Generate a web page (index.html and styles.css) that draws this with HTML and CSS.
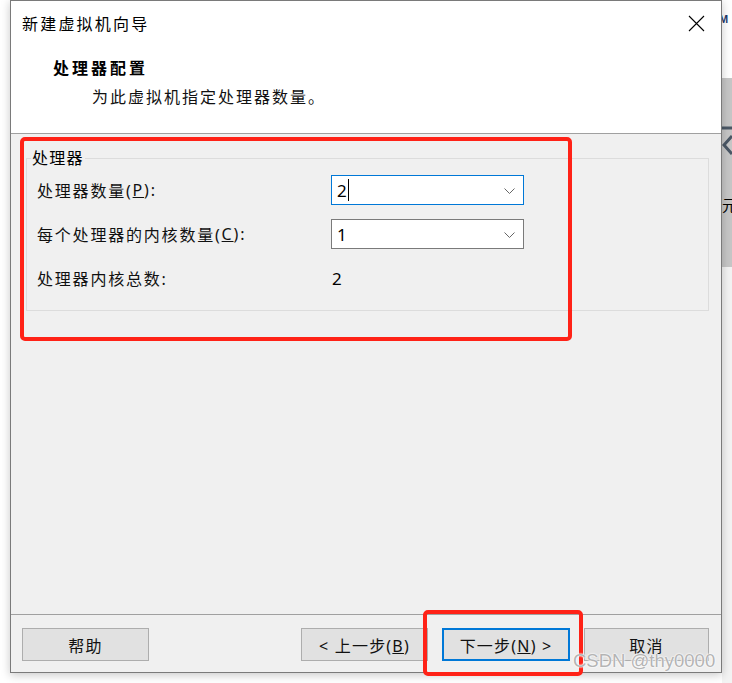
FILE: index.html
```html
<!DOCTYPE html>
<html lang="zh-CN">
<head>
    <meta charset="UTF-8">
    <title>新建虚拟机向导</title>
    <link rel="stylesheet" href="styles.css">
</head>
<body>
    <div class="screen">
        <div class="gutter"></div>
        <div class="dialog">
            <div class="header">
                <div class="titlebar">
                    <span class="title">新建虚拟机向导</span>
                    <span class="close">
                        <svg width="17" height="17" viewBox="0 0 17 17"><path d="M1 1L16 16M16 1L1 16" stroke="#000" stroke-width="1.1" fill="none"/></svg>
                    </span>
                </div>
                <div class="heading">处理器配置</div>
                <div class="subtitle">为此虚拟机指定处理器数量。</div>
            </div>
            <div class="body">
                <fieldset class="group">
                    <legend>处理器</legend>
                    <div class="rows">
                        <div class="label">处理器数量(<u>P</u>):</div>
                        <div class="combo focused"><span class="value">2</span><span class="caret"></span>
                            <svg class="chev" width="11" height="6" viewBox="0 0 11 6"><path d="M0.5 0.5L5.5 5.5L10.5 0.5" stroke="#666" stroke-width="1" fill="none"/></svg>
                        </div>
                        <div class="label">每个处理器的内核数量(<u>C</u>):</div>
                        <div class="combo"><span class="value">1</span>
                            <svg class="chev" width="11" height="6" viewBox="0 0 11 6"><path d="M0.5 0.5L5.5 5.5L10.5 0.5" stroke="#666" stroke-width="1" fill="none"/></svg>
                        </div>
                        <div class="label">处理器内核总数:</div>
                        <div class="total">2</div>
                    </div>
                </fieldset>
            </div>
            <div class="footer">
                <button class="btn">帮助</button>
                <div class="nav">
                    <button class="btn">&lt; 上一步(<u>B</u>)</button>
                    <button class="btn default">下一步(<u>N</u>) &gt;</button>
                    <button class="btn">取消</button>
                </div>
            </div>
        </div>
        <div class="strip">
            <div class="strip-top">M</div>
            <div class="strip-mid">
                <svg width="10" height="100" viewBox="0 0 10 100"><path d="M0 50H10" stroke="#4b5866" stroke-width="3"/><path d="M10 58L2 67L10 76" stroke="#4b5866" stroke-width="3" fill="none"/></svg>
                <span class="strip-text">元</span>
            </div>
            <div class="strip-bottom"></div>
        </div>
        <div class="mark mark-group"></div>
        <div class="mark mark-next"></div>
        <div class="watermark">CSDN @thy0000</div>
    </div>
</body>
</html>
```

FILE: styles.css
```css
* { margin: 0; padding: 0; box-sizing: border-box; }
body {
    background: #fff;
    font-family: "Noto Sans", "Noto Sans CJK SC", sans-serif;
    color: #000;
}
.screen {
    position: relative;
    width: 732px;
    height: 683px;
    display: flex;
    overflow: hidden;
}
.gutter { width: 10px; flex: none; }
.dialog {
    width: 712px;
    height: 673px;
    flex: none;
    border: 1px solid #7a7a7a;
    display: flex;
    flex-direction: column;
    background: #f0f0f0;
    box-shadow: 0 2px 9px rgba(0,0,0,0.22);
    position: relative;
    z-index: 1;
}
.header {
    height: 133px;
    background: #fff;
    border-bottom: 1px solid #a0a0a0;
    flex: none;
}
.titlebar {
    height: 44px;
    display: flex;
    align-items: center;
    justify-content: space-between;
    padding: 0 16px 0 11px;
}
.title { font-size: 16px; letter-spacing: 2.2px; }
.close { display: flex; }
.heading {
    margin-top: 12px;
    padding-left: 42px;
    line-height: 22px;
    font-size: 16px;
    font-weight: bold;
    letter-spacing: 3px;
}
.subtitle {
    margin-top: 7px;
    padding-left: 81px;
    line-height: 22px;
    font-size: 16px;
    letter-spacing: 2px;
    color: #111;
}
.body {
    flex: 1;
    padding: 0 12px 0 15px;
}
.group {
    margin-top: 13px;
    border: 1px solid #dcdcdc;
    padding: 0;
}
.group legend {
    margin-left: 4px;
    padding: 0 1px;
    font-size: 16px;
    line-height: 22px;
    letter-spacing: 1.2px;
}
.rows {
    display: grid;
    grid-template-columns: 294px 193px;
    grid-auto-rows: 30px;
    row-gap: 14px;
    padding: 6px 0 17px 10px;
}
.label {
    display: flex;
    align-items: center;
    font-size: 16px;
    letter-spacing: 1.8px;
    color: #111;
}
.combo {
    position: relative;
    display: flex;
    align-items: center;
    background: #fff;
    border: 1px solid #7a7a7a;
    padding-left: 5px;
    font-size: 17px;
}
.combo.focused { border-color: #0078d7; }
.caret {
    width: 1px;
    height: 22px;
    background: #000;
    margin-left: 1px;
}
.chev { position: absolute; right: 8px; top: 12px; }
.total {
    display: flex;
    align-items: center;
    padding-left: 1px;
    font-size: 17px;
}
.footer {
    height: 58px;
    flex: none;
    border-top: 1px solid #a0a0a0;
    display: flex;
    justify-content: space-between;
    align-items: flex-start;
    padding: 13px 12px 0 11px;
}
.nav { display: flex; gap: 14px; }
.btn {
    width: 127px;
    height: 33px;
    background: #e1e1e1;
    border: 1px solid #adadad;
    font-family: "Noto Sans", "Noto Sans CJK SC", sans-serif;
    font-size: 16px;
    letter-spacing: 1.2px;
    color: #111;
}
.btn.default { width: 128px; border: 2px solid #0078d7; }
.nav .btn:last-child { width: 125px; }
.strip {
    width: 10px;
    flex: none;
    display: flex;
    flex-direction: column;
}
.strip-top {
    height: 78px;
    background: #fff;
    font-family: "Liberation Sans", sans-serif;
    font-weight: bold;
    font-size: 11px;
    color: #1f3a6e;
    padding-top: 13px;
    margin-left: -3px;
}
.strip-mid {
    height: 189px;
    background: #c6c6c6;
    position: relative;
    overflow: hidden;
}
.strip-mid svg { position: absolute; left: 0; top: 0; }
.strip-text {
    position: absolute;
    left: 0;
    top: 118px;
    font-size: 15px;
    line-height: 18px;
    font-family: "Noto Sans CJK SC", sans-serif;
}
.strip-bottom { flex: 1; background: #f3f3f3; }
.mark {
    position: absolute;
    border: 4px solid #ff2217;
    border-radius: 5px;
    z-index: 2;
}
.mark-group { left: 20px; top: 137px; width: 552px; height: 204px; }
.mark-next { left: 423px; top: 610px; width: 160px; height: 66px; }
.watermark {
    position: absolute;
    left: 573px;
    top: 650px;
    z-index: 3;
    font-family: "Liberation Sans", sans-serif;
    font-size: 18.5px;
    color: #b4b4b4;
    text-shadow: 0 0 1px #fff, 0 0 2px #fff, 0 0 2px #fff;
}
```
